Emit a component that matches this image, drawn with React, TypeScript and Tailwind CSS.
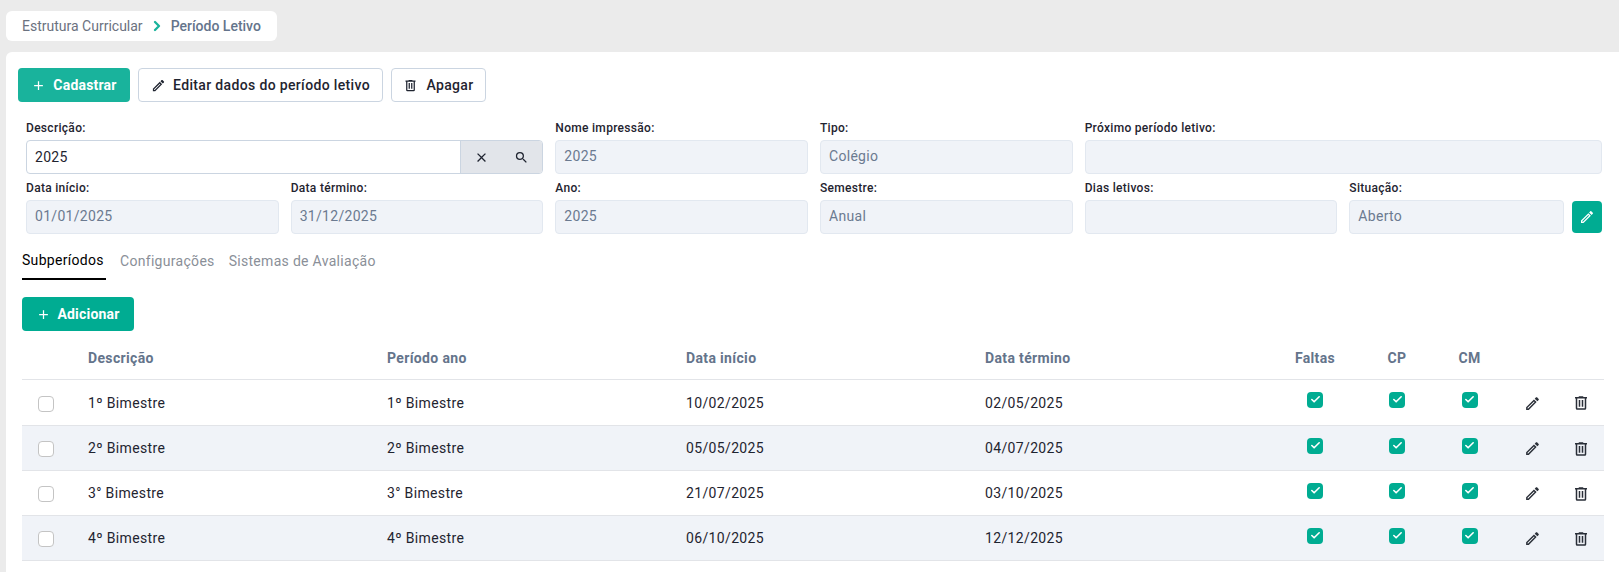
import { Check, ChevronRight } from "lucide-react";

const rowOne = [
  { label: "Nome impressão:", value: "2025" },
  { label: "Tipo:", value: "Colégio" },
];

const rowTwo = [
  { label: "Data início:", value: "01/01/2025" },
  { label: "Data término:", value: "31/12/2025" },
  { label: "Ano:", value: "2025" },
  { label: "Semestre:", value: "Anual" },
  { label: "Dias letivos:", value: "" },
];

const rows = [
  { name: "1º Bimestre", start: "10/02/2025", end: "02/05/2025" },
  { name: "2º Bimestre", start: "05/05/2025", end: "04/07/2025" },
  { name: "3° Bimestre", start: "21/07/2025", end: "03/10/2025" },
  { name: "4º Bimestre", start: "06/10/2025", end: "12/12/2025" },
];

const paths = {
  plus: "M19,13H13V19H11V13H5V11H11V5H13V11H19V13Z",
  pencil:
    "M14.06,9L15,9.94L5.92,19H5V18.08L14.06,9M17.66,3C17.41,3 17.15,3.1 16.96,3.29L15.13,5.12L18.88,8.87L20.71,7.04C21.1,6.65 21.1,6 20.71,5.63L18.37,3.29C18.17,3.09 17.92,3 17.66,3M14.06,6.19L3,17.25V21H6.75L17.81,9.94L14.06,6.19Z",
  trash:
    "M9,3V4H4V6H5V19A2,2 0 0,0 7,21H17A2,2 0 0,0 19,19V6H20V4H15V3H9M7,6H17V19H7V6M9,8V17H11V8H9M13,8V17H15V8H13Z",
  close:
    "M19,6.41L17.59,5L12,10.59L6.41,5L5,6.41L10.59,12L5,17.59L6.41,19L12,13.41L17.59,19L19,17.59L13.41,12L19,6.41Z",
  search:
    "M9.5,3A6.5,6.5 0 0,1 16,9.5C16,11.11 15.41,12.59 14.44,13.73L14.71,14H15.5L20.5,19L19,20.5L14,15.5V14.71L13.73,14.44C12.59,15.41 11.11,16 9.5,16A6.5,6.5 0 0,1 3,9.5A6.5,6.5 0 0,1 9.5,3M9.5,5C7,5 5,7 5,9.5C5,12 7,14 9.5,14C12,14 14,12 14,9.5C14,7 12,5 9.5,5Z",
};

function Icon({ d, size, className }: { d: string; size: number; className?: string }) {
  return (
    <svg width={size} height={size} viewBox="0 0 24 24" fill="currentColor" className={className}>
      <path d={d} />
    </svg>
  );
}

function Label({ text }: { text: string }) {
  return (
    <label className="block h-5 text-xs leading-4 font-medium tracking-[0.3px] text-[#1f2430]">
      {text}
    </label>
  );
}

function ReadOnly({ value }: { value: string }) {
  return (
    <div className="h-[34px] rounded border border-[#e2e8f0] bg-[#f0f3f8] px-2 text-sm leading-[31px] tracking-[0.3px] text-[#6b7a90]">
      {value}
    </div>
  );
}

function Field({ label, value, className }: { label: string; value: string; className?: string }) {
  return (
    <div className={className}>
      <Label text={label} />
      <ReadOnly value={value} />
    </div>
  );
}

function CheckCell() {
  return (
    <td className="p-0 align-top">
      <div className="mx-auto mt-[12px] flex h-4 w-4 items-center justify-center rounded-[4px] bg-[#00ac92]">
        <Check size={11} strokeWidth={3.5} className="text-white" />
      </div>
    </td>
  );
}

export default function App() {
  return (
    <div className="h-[572px] overflow-hidden bg-[#ebebeb] pt-[11px] pl-[6px] font-['Roboto',sans-serif]">
      <div className="flex h-[30px] w-[271px] items-center gap-[6px] rounded-md bg-white pl-[16px] text-sm text-[#6b7280]">
        <span>Estrutura Curricular</span>
        <ChevronRight size={16} strokeWidth={3.5} className="text-[#19b39c]" />
        <span className="font-medium text-[#64748b]">Período Letivo</span>
      </div>

      <div className="mt-[11px] h-[520px] rounded-tl-md bg-white pt-4 pl-[12px]">
        <div className="flex gap-2">
          <button className="flex h-[34px] w-[112px] items-center justify-center gap-[7px] rounded bg-[#19b39c] text-sm font-bold tracking-[0.2px] text-white">
            <Icon d={paths.plus} size={15} />
            Cadastrar
          </button>
          <button className="flex h-[34px] w-[245px] items-center justify-center gap-[7px] rounded border border-[#cbd5e1] bg-white text-sm font-medium tracking-[0.35px] text-[#1f2430]">
            <Icon d={paths.pencil} size={15} />
            Editar dados do período letivo
          </button>
          <button className="flex h-[34px] w-[95px] items-center justify-center gap-[8px] rounded border border-[#cbd5e1] bg-white text-sm font-medium tracking-[0.35px] text-[#1f2430]">
            <Icon d={paths.trash} size={15} />
            Apagar
          </button>
        </div>

        <div className="mt-[18px] ml-[2px] w-[1588px]">
          <div className="grid grid-cols-6">
            <div className="col-span-2 px-[6px]">
              <Label text="Descrição:" />
              <div className="flex h-[34px] rounded border border-[#cbd5e1]">
                <div className="flex-1 pl-2 text-sm leading-8 tracking-[0.3px] text-[#1f2430]">2025</div>
                <div className="flex w-[82px] items-center justify-center gap-[25px] rounded-r-[3px] border-l border-[#cbd5e1] bg-[#e2e5ea] text-[#1f2430]">
                  <Icon d={paths.close} size={15} />
                  <Icon d={paths.search} size={15} />
                </div>
              </div>
            </div>
            {rowOne.map((f) => (
              <Field key={f.label} label={f.label} value={f.value} className="px-[6px]" />
            ))}
            <Field label="Próximo período letivo:" value="" className="col-span-2 px-[6px]" />
          </div>

          <div className="mt-[6px] grid grid-cols-6">
            {rowTwo.map((f) => (
              <Field key={f.label} label={f.label} value={f.value} className="px-[6px]" />
            ))}
            <div className="px-[6px]">
              <Label text="Situação:" />
              <div className="flex gap-2">
                <div className="flex-1">
                  <ReadOnly value="Aberto" />
                </div>
                <button className="mt-px flex h-[32px] w-[30px] items-center justify-center rounded bg-[#00ac92] text-white">
                  <Icon d={paths.pencil} size={16} />
                </button>
              </div>
            </div>
          </div>
        </div>

        <div className="mt-[9px] ml-[4px] w-[1582px]">
          <div className="flex h-[37px] gap-[14px] text-sm tracking-[0.3px] text-[#8a8f98]">
            <div className="h-[37px] w-[84px] border-b-2 border-black pt-[7px] text-black">Subperíodos</div>
            <div className="pt-2">Configurações</div>
            <div className="pt-2">Sistemas de Avaliação</div>
          </div>

          <button className="mt-[17px] flex h-[34px] w-[112px] items-center justify-center gap-[6px] rounded bg-[#00ac92] text-sm font-bold tracking-[0.2px] text-white">
            <Icon d={paths.plus} size={15} />
            Adicionar
          </button>

          <table className="mt-[6px] w-[1582px] table-fixed border-collapse text-sm tracking-[0.35px] text-[#1f2430]">
            <thead>
              <tr className="h-[42px] border-b border-[#e2e4e8] text-left font-bold text-[#64748b]">
                <th className="w-[50px]" />
                <th className="w-[299px] pl-4">Descrição</th>
                <th className="w-[299px] pl-4">Período ano</th>
                <th className="w-[299px] pl-4">Data início</th>
                <th className="w-[300px] pl-4">Data término</th>
                <th className="w-[92px] text-center">Faltas</th>
                <th className="w-[72px] text-center">CP</th>
                <th className="w-[73px] text-center">CM</th>
                <th className="w-[52px]" />
                <th className="w-[46px]" />
              </tr>
            </thead>
            <tbody>
              {rows.map((r, i) => (
                <tr
                  key={r.name}
                  className={
                    i === 0
                      ? "h-[46px] border-b border-[#e2e4e8]"
                      : i % 2 === 1
                        ? "h-[45px] border-b border-[#e2e4e8] bg-[#f0f3f8]"
                        : "h-[45px] border-b border-[#e2e4e8]"
                  }
                >
                  <td className="pl-4">
                    <div className="mt-[3px] h-4 w-4 rounded-[4px] border border-[#c4c4c4] bg-white" />
                  </td>
                  <td className="pl-4 pt-px">{r.name}</td>
                  <td className="pl-4 pt-px">{r.name}</td>
                  <td className="pl-4 pt-px">{r.start}</td>
                  <td className="pl-4 pt-px">{r.end}</td>
                  <CheckCell />
                  <CheckCell />
                  <CheckCell />
                  <td>
                    <Icon d={paths.pencil} size={17} className="mx-auto mt-[2px] text-[#2a2f38]" />
                  </td>
                  <td>
                    <Icon d={paths.trash} size={18} className="mx-auto mt-[2px] text-[#2a2f38]" />
                  </td>
                </tr>
              ))}
            </tbody>
          </table>
        </div>
      </div>
    </div>
  );
}
